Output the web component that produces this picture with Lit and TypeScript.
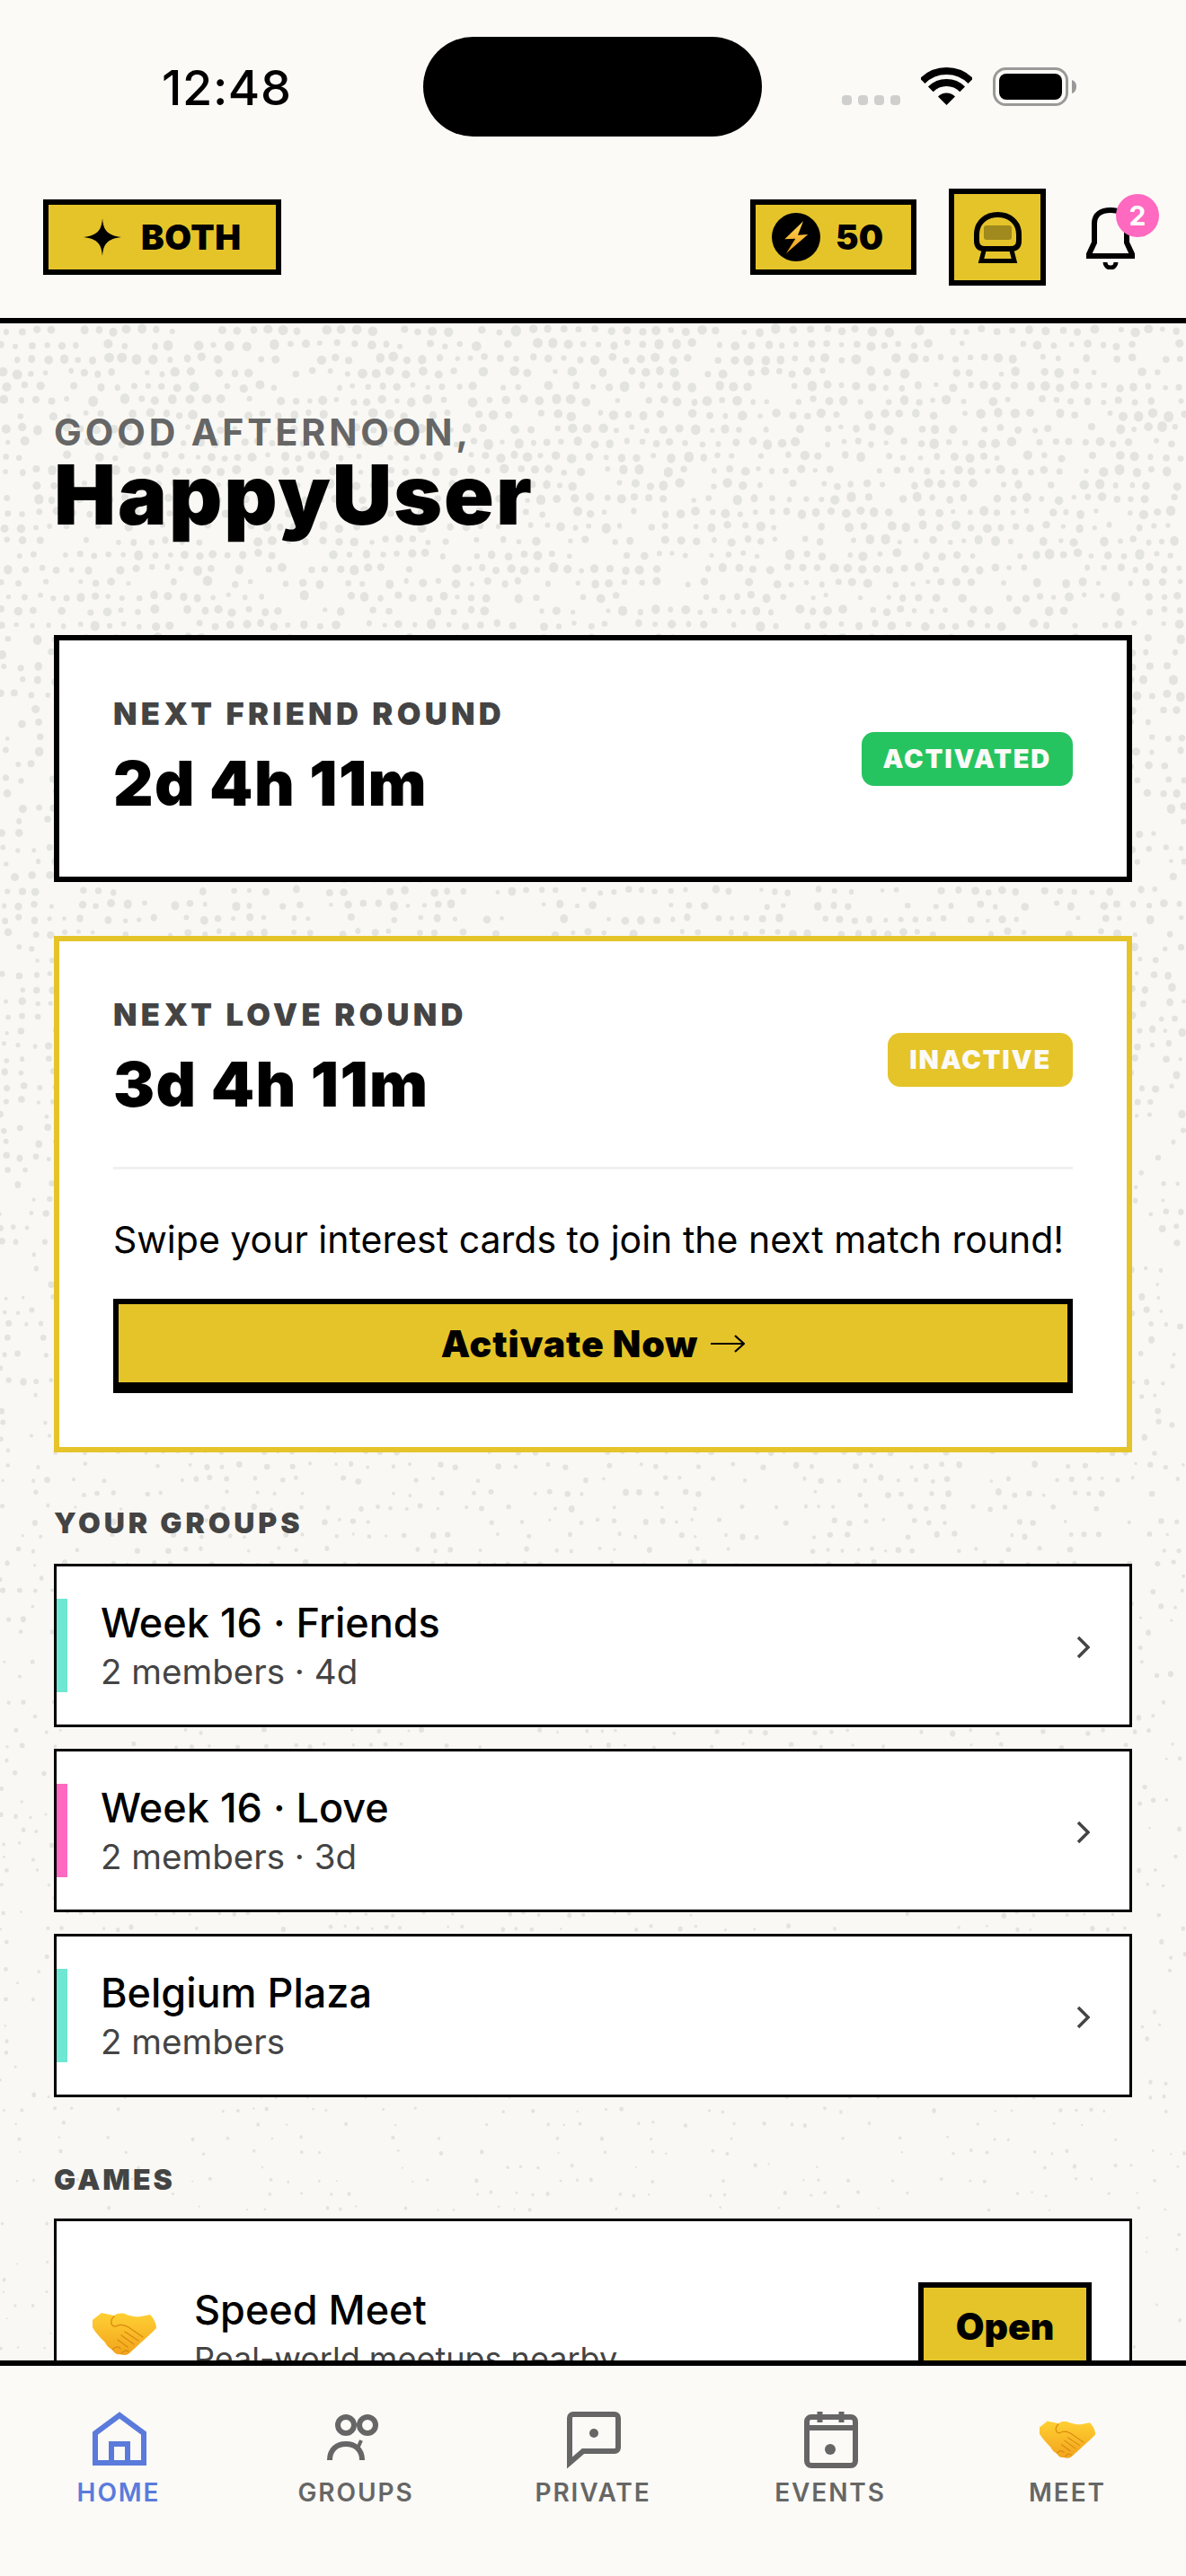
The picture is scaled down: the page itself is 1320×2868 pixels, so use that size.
import { LitElement, html, css, svg } from "lit";
import { customElement } from "lit/decorators.js";

function makeDots(): string {
  let seed = 1234567;
  const rnd = () => {
    seed = (seed * 1664525 + 1013904223) >>> 0;
    return seed / 4294967296;
  };
  let d = "";
  for (let y = 8; y < 2268; y += 15.6) {
    const t = y / 2268;
    const skip = 0.14 + 0.62 * t;
    const base = 1 - 0.68 * t;
    for (let x = rnd() * 10; x < 1320; x += 14 + rnd() * 6) {
      const a = rnd();
      const b = rnd();
      const c = rnd();
      if (a < skip) continue;
      const r = (2.8 + b * 2.8) * base;
      const cx = x.toFixed(1);
      const cy = (y + (c - 0.5) * 4.5).toFixed(1);
      const R = r.toFixed(1);
      d += `M${cx} ${cy}m-${R} 0a${R} ${R} 0 1 0 ${(2 * r).toFixed(1)} 0a${R} ${R} 0 1 0 -${(2 * r).toFixed(1)} 0`;
    }
  }
  return d;
}
const DOTS = makeDots();

const handshake = (w: number, h: number) => html`<svg class="shake" width=${w} height=${h} viewBox="0 0 72 48">
  <defs><linearGradient id="hs" x1="0" y1="0" x2="0" y2="1"><stop offset="0" stop-color="#ffd033"/><stop offset="1" stop-color="#f2a31c"/></linearGradient></defs>
  <path fill="url(#hs)" d="M0 8 L10 0 C14 1 20 2 24 3 C28 0 34 0 38 2 C44 4 50 5 54 4 L64 2 C68 6 71 12 71 17 C66 22 60 28 54 33 C50 37 46 40 43 43 C40 47 35 48 32 46 C27 47 24 45 22 41 C18 39 16 37 14 33 C10 29 3 22 0 16 Z"/>
  <path fill="none" stroke="#d98a0e" stroke-width="1.3" stroke-linecap="round" d="M24 4 C19 8 20 16 26 15 C31 12 35 13 40 16 L56 27 M36 21 L51 31 M32 25 L46 35 M28 30 L39 38 M22 41 C26 37 29 37 31 40 M32 46 C34 42 37 41 40 43"/>
</svg>`;

@customElement("app-root")
export class AppRoot extends LitElement {
  static styles = css`
    :host { display: flex; flex-direction: column; width: 1320px; height: 2868px; background: #fbfaf6; font-family: "Inter", "Liberation Sans", sans-serif; color: #000; overflow: hidden; }
    * { box-sizing: border-box; }
    .display { font-family: "Inter", "Liberation Sans", sans-serif; font-weight: 900; }

    .top { flex: none; background: #fbfaf6; border-bottom: 6px solid #000; position: relative; z-index: 2; }
    .status { display: flex; height: 174px; padding: 41px 0 0 180px; }
    .time { width: 291px; height: 111px; line-height: 114px; font-size: 54px; font-weight: 500; letter-spacing: 0.6px; }
    .island { width: 377px; height: 111px; border-radius: 56px; background: #000; }
    .indicators { display: flex; align-items: flex-end; height: 76px; margin-left: 89px; }
    .cell { display: flex; gap: 7px; }
    .cell i { width: 11px; height: 11px; border-radius: 4px; background: #cfcfcd; }
    .wifi { margin-left: 23px; display: block; }
    .battery { margin-left: 23px; display: block; margin-bottom: -1px; }

    .bar { display: flex; align-items: center; height: 180px; padding: 0 54px 0 48px; }
    .chip { display: flex; align-items: center; height: 84px; background: #e5c42a; border: 6px solid #000; font-size: 38.5px; }
    .mode { width: 265px; padding-left: 39px; gap: 22px; letter-spacing: 0.5px; }
    .mode svg, .coin svg { flex: none; }
    .coin { width: 185px; padding-left: 18px; gap: 17px; margin-left: auto; }
    .train { width: 108px; height: 108px; background: #e5c42a; border: 6px solid #000; margin-left: 36px; }
    .train svg { display: block; }
    .bell { position: relative; width: 60px; height: 72px; margin-left: 42px; }
    .bell svg { display: block; }
    .badge { position: absolute; top: -12px; left: 36px; width: 48px; height: 48px; border-radius: 50%; background: #ff69c0; color: #fff; font-size: 30px; font-weight: 700; display: flex; align-items: center; justify-content: center; }

    main { flex: 1; position: relative; overflow: hidden; background: #f9f8f4; padding: 96px 60px 0; }
    .dots { position: absolute; left: 0; top: 0; }
    .content { position: relative; }
    .greet { font-size: 41px; line-height: 50px; font-weight: 700; color: #666; letter-spacing: 3.9px; }
    .name { font-size: 92px; line-height: 90px; margin-bottom: 111px; letter-spacing: 2px; }

    .card { display: block; background: #fff; border: 6px solid #000; padding: 54px 60px; }
    .card.love { border-color: #e5c42a; margin-top: 60px; padding-bottom: 60px; }
    .head { display: flex; justify-content: space-between; align-items: center; }
    .label { font-size: 34.5px; line-height: 56px; color: #444; letter-spacing: 4.3px; }
    .count { font-size: 69px; line-height: 99px; letter-spacing: 1.4px; }
    .pill { height: 60px; padding: 0 24px; border-radius: 14px; color: #fbfaf6; font-size: 29px; line-height: 60px; letter-spacing: 1.8px; }
    .pill.on { background: #25c460; }
    .pill.off { background: #e5c42a; }
    .rule { height: 3px; background: #f0f0ef; margin-top: 42px; }
    .pitch { font-size: 41px; line-height: 60px; margin-top: 48px; white-space: nowrap; }
    .cta { display: flex; align-items: center; justify-content: center; gap: 14px; width: 100%; height: 105px; margin-top: 36px; background: #e5c42a; border: 6px solid #000; border-bottom-width: 12px; font-size: 41px; letter-spacing: 0.9px; }

    .section { font-size: 32px; line-height: 40px; color: #444; letter-spacing: 3.9px; margin: 59px 0 25px; }
    .section.games { margin: 72px 0 23px; letter-spacing: 3px; }
    .rows { display: flex; flex-direction: column; gap: 24px; }
    .row { display: flex; align-items: center; height: 182px; background: #fff; border: 3px solid #000; }
    .accent { width: 12px; height: 104px; flex: none; }
    .teal { background: #6ee7d3; }
    .pink { background: #ff69c0; }
    .txt { margin: 4px 0 0 37px; flex: 1; }
    .t { font-size: 45px; line-height: 54px; font-weight: 500; }
    .s { font-size: 38.5px; line-height: 54px; color: #444; }
    .chev { margin: 3px 44px 0 0; display: block; }

    .game { display: flex; align-items: center; height: 254px; background: #fff; border: 3px solid #000; padding: 0 42px 0 40px; }
    .game .txt { margin: 4px 0 0 41px; }
    .game .s { font-size: 36px; }
    .game .shake { flex: none; margin-top: 4px; }
    .open { width: 193px; height: 112px; background: #e5c42a; border: 6px solid #000; border-bottom-width: 12px; display: flex; align-items: center; justify-content: center; font-size: 41px; padding-bottom: 8px; }

    .tabs { flex: none; height: 240px; background: #fbfaf6; border-top: 6px solid #000; display: grid; grid-template-columns: repeat(5, 264px); padding-top: 46px; position: relative; z-index: 2; }
    .tab { display: flex; flex-direction: column; align-items: center; color: #666; }
    .tab.active { color: #5a7bdc; }
    .ico { width: 72px; height: 72px; display: flex; align-items: center; justify-content: center; }
    .ico svg { display: block; }
    .tab span { margin-top: 5px; font-size: 28px; line-height: 36px; font-weight: 600; letter-spacing: 1.9px; }
  `;

  render() {
    return html`
      <header class="top">
        <div class="status">
          <div class="time">12:48</div>
          <div class="island"></div>
          <div class="indicators">
            <div class="cell"><i></i><i></i><i></i><i></i></div>
            <svg class="wifi" width="57" height="42" viewBox="0 0 57 42" fill="none" stroke="#000" stroke-width="8">
              <path d="M1.63 15.13A38 38 0 0 1 55.37 15.13"/>
              <path d="M10.82 24.32A25 25 0 0 1 46.18 24.32"/>
              <path fill="#000" stroke="none" d="M28.5 42L19 32.5A13.5 13.5 0 0 1 38 32.5Z"/>
            </svg>
            <svg class="battery" width="93" height="43" viewBox="0 0 93 43">
              <rect x="1.5" y="1.5" width="81" height="40" rx="13" fill="none" stroke="#999" stroke-width="3"/>
              <rect x="7" y="7" width="70" height="29" rx="8" fill="#000"/>
              <path d="M88 14a6 7.5 0 0 1 5 7.5a6 7.5 0 0 1 -5 7.5z" fill="#999"/>
            </svg>
          </div>
        </div>
        <div class="bar">
          <div class="chip mode display">
            <svg width="42" height="42" viewBox="0 0 42 42"><path d="M21 0C22 13 26 19 42 21C26 23 22 29 21 42C20 29 16 23 0 21C16 19 20 13 21 0Z"/></svg>
            BOTH
          </div>
          <div class="chip coin display">
            <svg width="54" height="54" viewBox="0 0 54 54">
              <defs><linearGradient id="bolt" x1="0" y1="0" x2="0" y2="1"><stop offset="0" stop-color="#ffd95a"/><stop offset="1" stop-color="#f09a12"/></linearGradient></defs>
              <circle cx="27" cy="27" r="27" fill="#000"/>
              <path fill="url(#bolt)" d="M35 9.3L14.3 29.3L26.3 28.7L16 45L40.3 24L29 24.7Z"/>
            </svg>
            50
          </div>
          <div class="train">
            <svg width="96" height="96" viewBox="0 0 96 96">
              <path fill="none" stroke="#000" stroke-width="6" d="M25 45C25 31 36 23 48.5 23C61 23 72 31 72 45V52Q72 61 63 61H34Q25 61 25 52Z"/>
              <rect x="33" y="35" width="31" height="16" rx="3" fill="#000" opacity="0.3"/>
              <path fill="none" stroke="#000" stroke-width="5" d="M33 63L30 74.5H67L64 63"/>
            </svg>
          </div>
          <div class="bell">
            <svg width="60" height="72" viewBox="0 0 60 72" fill="none" stroke="#000" stroke-width="6">
              <path d="M6 57V55L12 42V21C12 10 20 6 30 6C40 6 48 10 48 21V42L54 55V57Z"/>
              <path stroke-width="5" d="M24 64A6 6 0 0 0 36 64"/>
            </svg>
            <div class="badge">2</div>
          </div>
        </div>
      </header>

      <main>
        <svg class="dots" width="1320" height="2268" viewBox="0 0 1320 2268">${svg`<path d=${DOTS} fill="#e3e3e0"/>`}</svg>
        <div class="content">
          <div class="greet">GOOD AFTERNOON,</div>
          <div class="name display">HappyUser</div>

          <section class="card">
            <div class="head">
              <div>
                <div class="label display">NEXT FRIEND ROUND</div>
                <div class="count display">2d 4h 11m</div>
              </div>
              <div class="pill on display">ACTIVATED</div>
            </div>
          </section>

          <section class="card love">
            <div class="head">
              <div>
                <div class="label display">NEXT LOVE ROUND</div>
                <div class="count display">3d 4h 11m</div>
              </div>
              <div class="pill off display">INACTIVE</div>
            </div>
            <div class="rule"></div>
            <div class="pitch">Swipe your interest cards to join the next match round!</div>
            <div class="cta display">
              Activate Now
              <svg width="38" height="22" viewBox="0 0 38 22" fill="none" stroke="#000" stroke-width="2.2"><path d="M0 11H36M27 2L37 11L27 20"/></svg>
            </div>
          </section>

          <div class="section display">YOUR GROUPS</div>
          <div class="rows">
            ${[
              ["teal", "Week 16 · Friends", "2 members · 4d"],
              ["pink", "Week 16 · Love", "2 members · 3d"],
              ["teal", "Belgium Plaza", "2 members"],
            ].map(
              ([c, t, s]) => html`
                <div class="row">
                  <div class="accent ${c}"></div>
                  <div class="txt"><div class="t">${t}</div><div class="s">${s}</div></div>
                  <svg class="chev" width="15" height="26" viewBox="0 0 15 26" fill="none" stroke="#444" stroke-width="3.5"><path d="M2 2L13 13L2 24"/></svg>
                </div>
              `
            )}
          </div>

          <div class="section games display">GAMES</div>
          <div class="game">
            ${handshake(72, 48)}
            <div class="txt"><div class="t">Speed Meet</div><div class="s">Real-world meetups nearby</div></div>
            <div class="open display">Open</div>
          </div>
        </div>
      </main>

      <nav class="tabs">
        <div class="tab active">
          <div class="ico"><svg width="72" height="72" viewBox="0 0 72 72" fill="none" stroke="currentColor" stroke-width="6"><path d="M10 62V29L37 9L64 29V62Z"/><path d="M28 62V41H46V62"/></svg></div>
          <span>HOME</span>
        </div>
        <div class="tab">
          <div class="ico"><svg width="72" height="72" viewBox="0 0 72 72" fill="none" stroke="currentColor" stroke-width="6"><circle cx="25" cy="20" r="9"/><circle cx="49" cy="20" r="9"/><path d="M7 59C7 47 15 41 25 41C35 41 43 47 43 59"/><path stroke-width="4" d="M42 37L38 46"/></svg></div>
          <span>GROUPS</span>
        </div>
        <div class="tab">
          <div class="ico"><svg width="72" height="72" viewBox="0 0 72 72" fill="none" stroke="currentColor" stroke-width="6"><path d="M14 8H60A4 4 0 0 1 64 12V45A4 4 0 0 1 60 49H25L10 62V12A4 4 0 0 1 14 8Z"/><circle cx="37" cy="29" r="5" fill="currentColor" stroke="none"/></svg></div>
          <span>PRIVATE</span>
        </div>
        <div class="tab">
          <div class="ico"><svg width="72" height="72" viewBox="0 0 72 72" fill="none" stroke="currentColor" stroke-width="6"><rect x="10" y="11" width="54" height="54" rx="5"/><path d="M10 23H64M24.5 5V17M48.5 5V17"/><circle cx="36" cy="47" r="6" fill="currentColor" stroke="none"/></svg></div>
          <span>EVENTS</span>
        </div>
        <div class="tab">
          <div class="ico">${handshake(63, 43)}</div>
          <span>MEET</span>
        </div>
      </nav>
    `;
  }
}
